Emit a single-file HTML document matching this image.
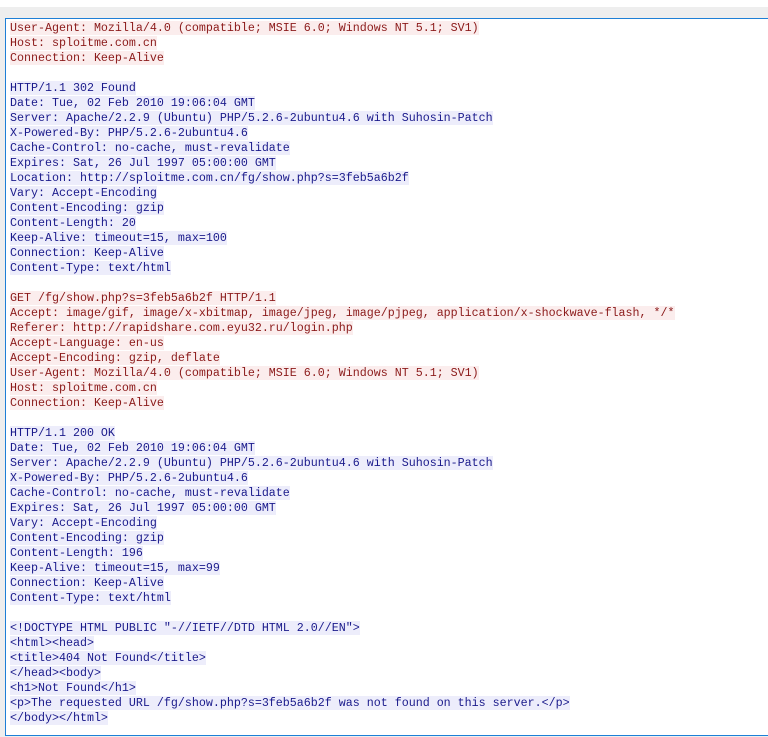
<!DOCTYPE html>
<html><head><style>
html,body{margin:0;padding:0;background:#fff;width:768px;height:737px;overflow:hidden}
.g{position:absolute;left:0;top:7px;width:768px;height:730px;background:#eeeeee}
.box{position:absolute;left:5px;top:18px;width:780px;height:716px;border:1px solid #1e7fd6;background:#fff}
pre{margin:0;position:absolute;left:10px;top:21px;font-family:"Liberation Mono",monospace;font-size:11.67px;line-height:15px}
.c{color:#8b1a1a;background:#fbeded}
.s{color:#1a1a8b;background:#ededfb}
</style></head><body>
<div class="g"></div><div class="box"></div>
<pre><span class="c">User-Agent: Mozilla/4.0 (compatible; MSIE 6.0; Windows NT 5.1; SV1)</span>
<span class="c">Host: sploitme.com.cn</span>
<span class="c">Connection: Keep-Alive</span>

<span class="s">HTTP/1.1 302 Found</span>
<span class="s">Date: Tue, 02 Feb 2010 19:06:04 GMT</span>
<span class="s">Server: Apache/2.2.9 (Ubuntu) PHP/5.2.6-2ubuntu4.6 with Suhosin-Patch</span>
<span class="s">X-Powered-By: PHP/5.2.6-2ubuntu4.6</span>
<span class="s">Cache-Control: no-cache, must-revalidate</span>
<span class="s">Expires: Sat, 26 Jul 1997 05:00:00 GMT</span>
<span class="s">Location: http://sploitme.com.cn/fg/show.php?s=3feb5a6b2f</span>
<span class="s">Vary: Accept-Encoding</span>
<span class="s">Content-Encoding: gzip</span>
<span class="s">Content-Length: 20</span>
<span class="s">Keep-Alive: timeout=15, max=100</span>
<span class="s">Connection: Keep-Alive</span>
<span class="s">Content-Type: text/html</span>

<span class="c">GET /fg/show.php?s=3feb5a6b2f HTTP/1.1</span>
<span class="c">Accept: image/gif, image/x-xbitmap, image/jpeg, image/pjpeg, application/x-shockwave-flash, */*</span>
<span class="c">Referer: http://rapidshare.com.eyu32.ru/login.php</span>
<span class="c">Accept-Language: en-us</span>
<span class="c">Accept-Encoding: gzip, deflate</span>
<span class="c">User-Agent: Mozilla/4.0 (compatible; MSIE 6.0; Windows NT 5.1; SV1)</span>
<span class="c">Host: sploitme.com.cn</span>
<span class="c">Connection: Keep-Alive</span>

<span class="s">HTTP/1.1 200 OK</span>
<span class="s">Date: Tue, 02 Feb 2010 19:06:04 GMT</span>
<span class="s">Server: Apache/2.2.9 (Ubuntu) PHP/5.2.6-2ubuntu4.6 with Suhosin-Patch</span>
<span class="s">X-Powered-By: PHP/5.2.6-2ubuntu4.6</span>
<span class="s">Cache-Control: no-cache, must-revalidate</span>
<span class="s">Expires: Sat, 26 Jul 1997 05:00:00 GMT</span>
<span class="s">Vary: Accept-Encoding</span>
<span class="s">Content-Encoding: gzip</span>
<span class="s">Content-Length: 196</span>
<span class="s">Keep-Alive: timeout=15, max=99</span>
<span class="s">Connection: Keep-Alive</span>
<span class="s">Content-Type: text/html</span>

<span class="s">&lt;!DOCTYPE HTML PUBLIC "-//IETF//DTD HTML 2.0//EN"&gt;</span>
<span class="s">&lt;html&gt;&lt;head&gt;</span>
<span class="s">&lt;title&gt;404 Not Found&lt;/title&gt;</span>
<span class="s">&lt;/head&gt;&lt;body&gt;</span>
<span class="s">&lt;h1&gt;Not Found&lt;/h1&gt;</span>
<span class="s">&lt;p&gt;The requested URL /fg/show.php?s=3feb5a6b2f was not found on this server.&lt;/p&gt;</span>
<span class="s">&lt;/body&gt;&lt;/html&gt;</span></pre>
</body></html>
